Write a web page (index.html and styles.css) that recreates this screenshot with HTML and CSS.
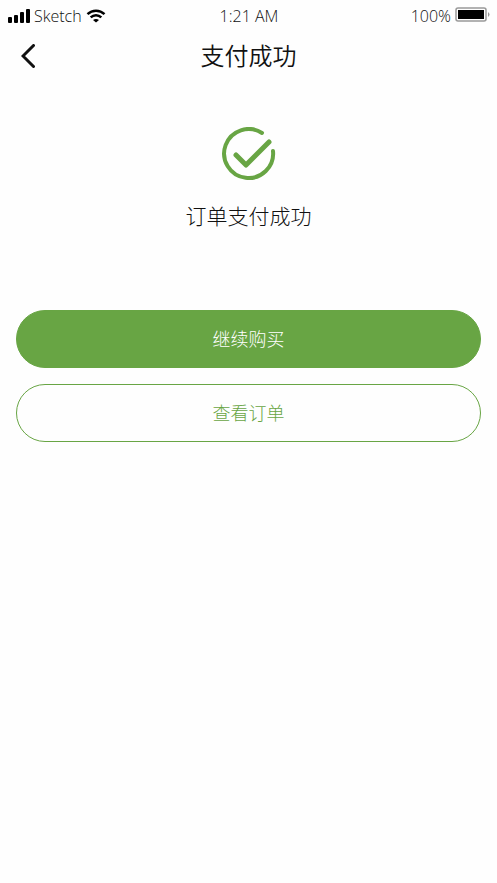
FILE: index.html
```html
<!DOCTYPE html>
<html lang="zh-CN">
<head>
<meta charset="utf-8">
<meta name="viewport" content="width=device-width, initial-scale=1">
<title>支付成功</title>
<link rel="stylesheet" href="styles.css">
</head>
<body>
<div class="status-bar">
  <div class="carrier">
    <svg class="signal" viewBox="0 0 22 14" aria-hidden="true"><rect x="0" y="8" width="4" height="6" rx="1"/><rect x="6" y="6" width="4" height="8" rx="1"/><rect x="12" y="3" width="4" height="11" rx="1"/><rect x="18" y="0" width="4" height="14" rx="1"/></svg>
    <span>Sketch</span>
    <svg class="wifi" viewBox="0 0 20 14" aria-hidden="true"><path d="M1.500 5.200C6.300.600 13.700.600 18.500 5.200M4.700 8.400C7.700 5.500 12.300 5.500 15.300 8.400"/><path class="dot" d="M7 11q3-2 6 0l-3 2.500z"/></svg>
  </div>
  <span class="clock">1:21 AM</span>
  <div class="power">
    <span>100%</span>
    <svg class="battery" viewBox="0 0 35 15" aria-hidden="true"><rect class="case" x="1" y="1" width="30" height="13" rx="2"/><rect x="3" y="3" width="26" height="9"/><path class="tip" d="M33 5q3 2.500 0 5z"/></svg>
  </div>
</div>
<header class="nav">
  <button class="back" type="button" aria-label="返回"><svg viewBox="0 0 14 24" aria-hidden="true"><path d="M12.500 1.500 2 12l10.500 10.500"/></svg></button>
  <h1>支付成功</h1>
</header>
<main>
  <section class="result">
    <svg class="check" viewBox="0 0 54 54" aria-hidden="true"><path d="M40 6A24.500 24.500 0 1 0 51 24"/><path class="tick" d="M14 28l10 10L47 15"/></svg>
    <p>订单支付成功</p>
  </section>
  <div class="actions">
    <button class="btn primary" type="button">继续购买</button>
    <button class="btn outline" type="button">查看订单</button>
  </div>
</main>
</body>
</html>
```
FILE: styles.css
```css
* { box-sizing: border-box; }
body {
  margin: 0;
  background: #fefefe;
  color: #111;
  font-family: "Noto Sans CJK SC", sans-serif;
}
svg { display: block; }
button { font-family: inherit; cursor: pointer; }
.status-bar {
  display: grid;
  grid-template-columns: 1fr auto 1fr;
  align-items: center;
  height: 32px;
  padding: 0 7px 0 8px;
  font-family: "Open Sans", "Noto Sans", sans-serif;
  font-size: 16px;
  font-weight: 300;
}
.carrier, .power { display: flex; align-items: center; gap: 4px; }
.power { justify-content: flex-end; }
.signal { width: 22px; height: 14px; }
.wifi { width: 20px; height: 14px; fill: none; stroke: #000; stroke-width: 2.5; }
.wifi .dot { fill: #000; stroke: none; }
.battery { width: 35px; height: 15px; margin-bottom: 4px; }
.battery .case { fill: none; stroke: #999; stroke-width: 1.5; }
.battery .tip { fill: #999; }
.nav {
  display: grid;
  grid-template-columns: 40px 1fr 40px;
  align-items: center;
  height: 48px;
  padding: 0 8px;
}
.back { display: flex; justify-content: center; padding: 8px 0; border: 0; background: none; }
.back svg { width: 14px; height: 24px; fill: none; stroke: #111; stroke-width: 3; stroke-linecap: round; }
h1 { margin: 0; padding-bottom: 2px; font-size: 24px; font-weight: 350; line-height: 32px; text-align: center; }
.result { display: flex; flex-direction: column; align-items: center; gap: 20px; padding-top: 47px; }
.check { width: 54px; height: 54px; fill: none; stroke: #68a544; stroke-width: 4; stroke-linecap: round; stroke-linejoin: round; }
.check .tick { stroke-width: 5; }
.result p { margin: 0; font-size: 21px; font-weight: 300; line-height: 28px; }
.actions { display: grid; gap: 16px; padding: 81px 16px 16px; }
.btn { height: 58px; padding: 0 16px 2px; border: 1px solid #68a544; border-radius: 29px; font-size: 18px; font-weight: 300; }
.primary { background: #68a544; color: #fff; }
.outline { background: #fefefe; color: #68a544; }
```
